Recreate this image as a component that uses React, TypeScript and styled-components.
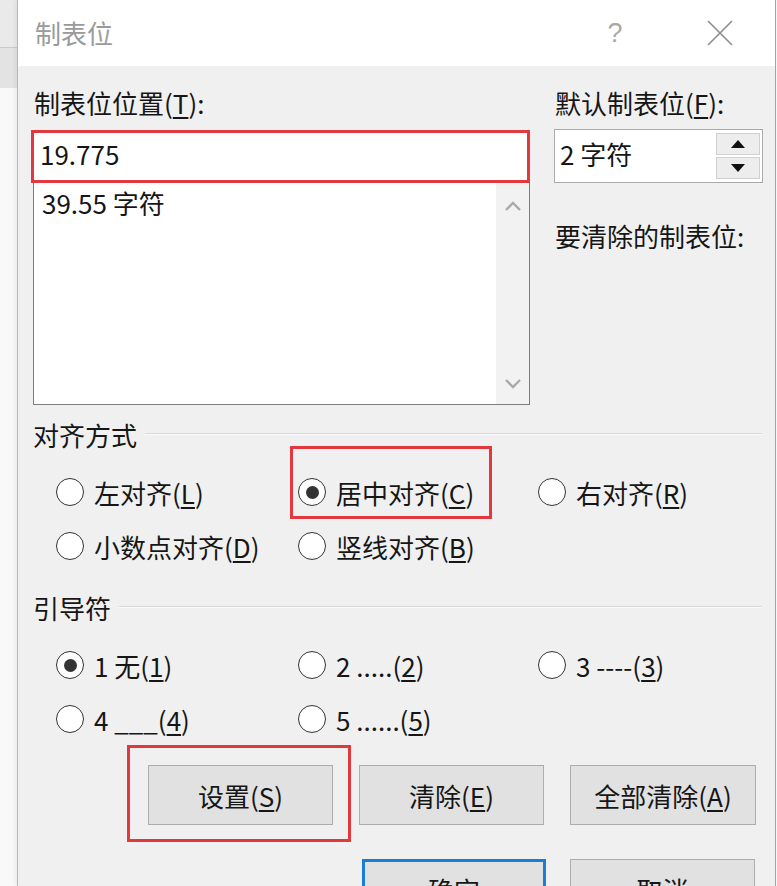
import React from "react";
import styled, { createGlobalStyle } from "styled-components";

const Global = createGlobalStyle`
  html, body { margin: 0; padding: 0; background: #f7f7f7; }
  body { font-family: "Noto Sans CJK SC", "Noto Sans", sans-serif; color: #161616; }
  u { text-decoration-thickness: 1.5px; text-underline-offset: 3px; }
`;

const Page = styled.div`
  display: flex;
  width: 777px;
  height: 886px;
  overflow: hidden;
`;

const Backdrop = styled.div`
  width: 17px;
  flex: none;
  display: flex;
  flex-direction: column;
`;

const Band = styled.div<{ $h?: number; $bg: string; $line?: boolean }>`
  height: ${(p) => (p.$h ? `${p.$h}px` : "auto")};
  flex: ${(p) => (p.$h ? "none" : "1")};
  background: ${(p) => p.$bg};
  border-bottom: ${(p) => (p.$line ? "1px solid #cbcbcb" : "none")};
`;

const Dialog = styled.div`
  width: 757px;
  flex: none;
  border-left: 1px solid #b9b9b9;
  border-right: 1px solid #a4a4a4;
  background: #f0f0f0;
  display: flex;
  flex-direction: column;
  box-shadow: -2px 0 4px rgba(0, 0, 0, 0.06);
`;

const TitleBar = styled.div`
  height: 66px;
  flex: none;
  background: #ffffff;
  display: flex;
  align-items: center;
  padding: 0 31px 0 17px;
`;

const TitleText = styled.div`
  flex: 1;
  font-size: 26px;
  color: #9a9a9a;
  line-height: 1;
`;

const HelpMark = styled.div`
  width: 30px;
  text-align: center;
  font-family: "Liberation Sans", sans-serif;
  font-size: 27px;
  color: #a8a8a8;
  line-height: 1;
`;

const CloseBox = styled.div`
  width: 48px;
  margin-left: 66px;
  display: flex;
  align-items: center;
  justify-content: center;
`;

const Body = styled.div`
  flex: 1;
  padding: 0 12px 0 13px;
  display: flex;
  flex-direction: column;
`;

const TopGrid = styled.div`
  margin-top: 17px;
  display: grid;
  grid-template-columns: 499px 209px;
  column-gap: 24px;
`;

const Column = styled.div`
  display: flex;
  flex-direction: column;
`;

const Label = styled.div<{ $indent?: number; $top?: number }>`
  height: 40px;
  line-height: 40px;
  font-size: 26px;
  padding-left: ${(p) => p.$indent ?? 0}px;
  margin-top: ${(p) => p.$top ?? 0}px;
  white-space: nowrap;
`;

const TextInput = styled.div`
  margin-top: 7px;
  height: 53px;
  box-sizing: border-box;
  border: 3px solid #e2393f;
  background: #ffffff;
  padding: 0 0 6px 6px;
  display: flex;
  align-items: center;
  font-size: 26px;
  position: relative;
  z-index: 1;
`;

const ListBox = styled.div`
  margin-left: 2px;
  margin-top: -3px;
  width: 497px;
  height: 225px;
  box-sizing: border-box;
  border: 1px solid #7d7d7d;
  border-top: none;
  background: #ffffff;
  display: flex;
`;

const ListItems = styled.div`
  flex: 1;
  padding: 5px 0 0 8px;
  font-size: 26px;
  line-height: 36px;
`;

const ScrollBar = styled.div`
  width: 33px;
  background: #f2f2f2;
  display: flex;
  flex-direction: column;
  align-items: center;
  justify-content: space-between;
  padding: 20px 0 14px;
`;

const SpinBox = styled.div`
  margin-top: 6px;
  height: 54px;
  box-sizing: border-box;
  border: 1px solid #ababab;
  background: #ffffff;
  display: flex;
  align-items: center;
  padding-left: 5px;
  font-size: 26px;
`;

const SpinValue = styled.div`
  flex: 1;
  padding-bottom: 6px;
`;

const SpinButtons = styled.div`
  width: 44px;
  margin-right: 2px;
  align-self: stretch;
  padding: 3px 0;
  display: flex;
  flex-direction: column;
  gap: 2px;
`;

const SpinButton = styled.div`
  flex: 1;
  background: #ededed;
  border: 1px solid #d0d0d0;
  display: flex;
  align-items: center;
  justify-content: center;
`;

const GroupHeader = styled.div<{ $top: number }>`
  margin-top: ${(p) => p.$top}px;
  height: 30px;
  display: flex;
  align-items: center;
  padding-left: 2px;
  font-size: 26px;
  line-height: 30px;
`;

const GroupLine = styled.div`
  flex: 1;
  height: 1px;
  margin: -4px 1px 0 8px;
  background: #d9d9d9;
  box-shadow: 0 1px 0 #fafafa;
`;

const RadioGrid = styled.div`
  margin-top: 15px;
  padding-left: 25px;
  display: grid;
  grid-template-columns: 242px 240px auto;
  grid-auto-rows: 54px;
`;

const RadioItem = styled.div`
  display: flex;
  align-items: center;
  gap: 10px;
  font-size: 26px;
  white-space: nowrap;
  justify-self: start;
  position: relative;
`;

const RadioCircle = styled.div<{ $checked?: boolean }>`
  width: 28px;
  height: 28px;
  box-sizing: border-box;
  border-radius: 50%;
  border: 1.8px solid #333333;
  background: #ffffff;
  display: flex;
  align-items: center;
  justify-content: center;
  flex: none;
  &::after {
    content: "";
    display: ${(p) => (p.$checked ? "block" : "none")};
    width: 13px;
    height: 13px;
    border-radius: 50%;
    background: #333333;
  }
`;

const Highlight = styled.div<{ $l: number; $t: number; $w: number; $h: number }>`
  position: absolute;
  left: ${(p) => p.$l}px;
  top: ${(p) => p.$t}px;
  width: ${(p) => p.$w}px;
  height: ${(p) => p.$h}px;
  box-sizing: border-box;
  border: 3px solid #e2393f;
  pointer-events: none;
`;

const ButtonRow = styled.div<{ $top: number; $left: number; $gap: number }>`
  margin-top: ${(p) => p.$top}px;
  padding-left: ${(p) => p.$left}px;
  display: flex;
  gap: ${(p) => p.$gap}px;
`;

const Button = styled.div<{ $w: number; $primary?: boolean }>`
  width: ${(p) => p.$w}px;
  height: 60px;
  flex: none;
  box-sizing: border-box;
  background: #e1e1e1;
  border: ${(p) => (p.$primary ? "3px solid #1a7fd4" : "1px solid #adadad")};
  display: flex;
  align-items: center;
  justify-content: center;
  font-size: 26px;
  position: relative;
`;

const Chevron = ({ up }: { up?: boolean }) => (
  <svg width="18" height="12" viewBox="0 0 18 12">
    <path
      d={up ? "M2 10 L9 3 L16 10" : "M2 2 L9 9 L16 2"}
      fill="none"
      stroke="#a9a9a9"
      strokeWidth="2.4"
    />
  </svg>
);

const Triangle = ({ up }: { up?: boolean }) => (
  <svg width="14" height="8" viewBox="0 0 14 8">
    <path d={up ? "M0 8 L7 0 L14 8 Z" : "M0 0 L14 0 L7 8 Z"} fill="#111" />
  </svg>
);

const CloseIcon = () => (
  <svg width="26" height="26" viewBox="0 0 26 26">
    <path d="M1 1 L25 25 M25 1 L1 25" stroke="#8c8c8c" strokeWidth="1.6" />
  </svg>
);

type Opt = { label: React.ReactNode; checked?: boolean; mark?: boolean };

const alignOpts: Opt[] = [
  { label: <>左对齐(<u>L</u>)</> },
  { label: <>居中对齐(<u>C</u>)</>, checked: true, mark: true },
  { label: <>右对齐(<u>R</u>)</> },
  { label: <>小数点对齐(<u>D</u>)</> },
  { label: <>竖线对齐(<u>B</u>)</> },
];

const leaderOpts: Opt[] = [
  { label: <>1 无(<u>1</u>)</>, checked: true },
  { label: <>2 .....(<u>2</u>)</> },
  { label: <>3 ----(<u>3</u>)</> },
  { label: <>4 ___(<u>4</u>)</> },
  { label: <>5 ......(<u>5</u>)</> },
];

const Radios = ({ opts }: { opts: Opt[] }) => (
  <RadioGrid>
    {opts.map((o, i) => (
      <RadioItem key={i}>
        <RadioCircle $checked={o.checked} />
        <span>{o.label}</span>
        {o.mark && <Highlight $l={-8} $t={-19} $w={202} $h={73} />}
      </RadioItem>
    ))}
  </RadioGrid>
);

export default function App() {
  return (
    <Page>
      <Global />
      <Backdrop>
        <Band $h={47} $bg="#eaeaea" $line />
        <Band $h={40} $bg="#e3e3e3" />
        <Band $bg="#f9f9f9" />
      </Backdrop>
      <Dialog>
        <TitleBar>
          <TitleText>制表位</TitleText>
          <HelpMark>?</HelpMark>
          <CloseBox>
            <CloseIcon />
          </CloseBox>
        </TitleBar>
        <Body>
          <TopGrid>
            <Column>
              <Label $indent={3}>
                制表位位置(<u>T</u>):
              </Label>
              <TextInput>19.775</TextInput>
              <ListBox>
                <ListItems>39.55 字符</ListItems>
                <ScrollBar>
                  <Chevron up />
                  <Chevron />
                </ScrollBar>
              </ListBox>
            </Column>
            <Column>
              <Label $indent={1}>
                默认制表位(<u>F</u>):
              </Label>
              <SpinBox>
                <SpinValue>2 字符</SpinValue>
                <SpinButtons>
                  <SpinButton>
                    <Triangle up />
                  </SpinButton>
                  <SpinButton>
                    <Triangle />
                  </SpinButton>
                </SpinButtons>
              </SpinBox>
              <Label $indent={1} $top={33}>
                要清除的制表位:
              </Label>
            </Column>
          </TopGrid>

          <GroupHeader $top={15}>
            对齐方式
            <GroupLine />
          </GroupHeader>
          <Radios opts={alignOpts} />

          <GroupHeader $top={20}>
            引导符
            <GroupLine />
          </GroupHeader>
          <Radios opts={leaderOpts} />

          <ButtonRow $top={19} $left={117} $gap={26}>
            <Button $w={185}>
              设置(<u>S</u>)
              <Highlight $l={-22} $t={-21} $w={224} $h={97} />
            </Button>
            <Button $w={185}>
              清除(<u>E</u>)
            </Button>
            <Button $w={186}>
              全部清除(<u>A</u>)
            </Button>
          </ButtonRow>
          <ButtonRow $top={34} $left={331} $gap={24}>
            <Button $w={184} $primary>
              确定
            </Button>
            <Button $w={185}>取消</Button>
          </ButtonRow>
        </Body>
      </Dialog>
    </Page>
  );
}
